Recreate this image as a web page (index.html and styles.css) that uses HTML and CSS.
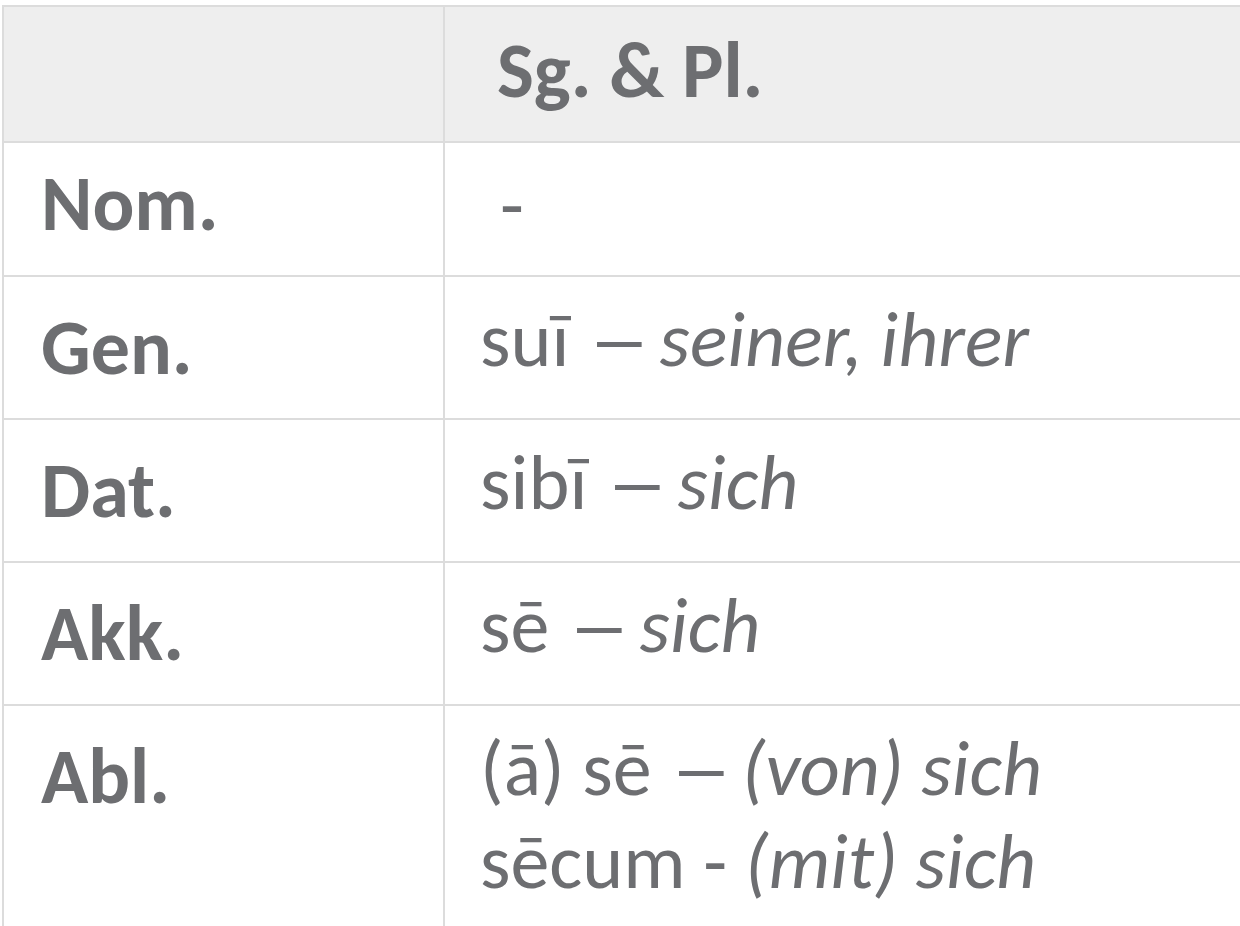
FILE: index.html
```html
<!DOCTYPE html>
<html lang="de">
<head>
<meta charset="utf-8">
<title>Reflexivpronomen</title>
<link rel="stylesheet" href="styles.css">
</head>
<body>
<table class="decl">
  <thead>
    <tr class="row-head">
      <th class="label"></th>
      <th class="form">Sg. &amp; Pl.</th>
    </tr>
  </thead>
  <tbody>
    <tr class="row-nom">
      <th class="label">Nom.</th>
      <td class="form hy">-</td>
    </tr>
    <tr class="row">
      <th class="label">Gen.</th>
      <td class="form">suī <span class="dash">–</span> <em>seiner, ihrer</em></td>
    </tr>
    <tr class="row">
      <th class="label">Dat.</th>
      <td class="form">sibī <span class="dash">–</span> <em>sich</em></td>
    </tr>
    <tr class="row">
      <th class="label">Akk.</th>
      <td class="form">sē <span class="dash">–</span> <em>sich</em></td>
    </tr>
    <tr class="row-last">
      <th class="label">Abl.</th>
      <td class="form">(ā) sē <span class="dash">–</span> <em>(von) sich</em><br>sēcum - <em>(mit) sich</em></td>
    </tr>
  </tbody>
</table>
</body>
</html>
```

FILE: styles.css
```css
html, body {
  margin: 0;
  padding: 0;
  background: #ffffff;
  overflow: hidden;
}
body {
  width: 1240px;
  height: 926px;
  font-family: "Carlito", "Lato", "Open Sans", sans-serif;
  color: #6d6e71;
}
.decl {
  border-collapse: collapse;
  margin: 5px 0 0 2px;
  width: 1238px;
  table-layout: fixed;
}
.decl th, .decl td {
  border: 2px solid #dcdcdc;
  padding: 0;
  text-align: left;
  vertical-align: top;
}
.decl .form {
  border-right: none;
}
.label {
  width: 441px;
  font-weight: 700;
  font-size: 78px;
  line-height: 94px;
  padding-left: 37px !important;
  box-sizing: border-box;
}
.form {
  font-weight: 400;
  font-size: 78px;
  line-height: 93px;
  padding-left: 35px !important;
}
.form em {
  font-style: italic;
}
.dash {
  display: inline-block;
  transform: scaleX(1.6);
  margin: 0 3px 0 13px;
}
.row-head th {
  background: #eeeeee;
  height: 126px;
  vertical-align: middle;
  padding-bottom: 8px !important;
}
.row-head .form {
  font-weight: 700;
  padding-left: 52px !important;
}
.row-nom th, .row-nom td {
  height: 122px;
  vertical-align: middle;
  padding-bottom: 10px !important;
}
.row-nom .hy {
  padding-left: 55px !important;
}
.row th {
  height: 141px;
  vertical-align: middle;
}
.row td {
  height: 125px;
  vertical-align: middle;
  padding-bottom: 16px !important;
}
.row-last th {
  height: 200px;
  padding-top: 24px !important;
  border-bottom: none;
}
.row-last td {
  height: 208px;
  padding-top: 16px !important;
  border-bottom: none;
}
```
